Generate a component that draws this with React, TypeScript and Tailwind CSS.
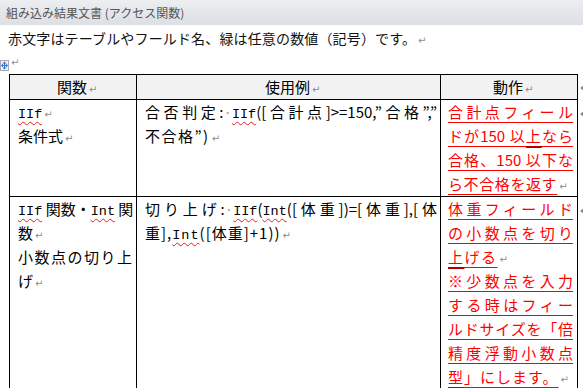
import React from 'react';

// 段落記号・スペース記号など Word の編集記号
const Mark = ({ hang = false }: { hang?: boolean }) => (
  <span
    className={`inline-block ${hang ? 'w-0' : 'w-[10px]'} pl-[2px] text-[10px] leading-none text-[#8c8c8c] font-['DejaVu_Sans',sans-serif] align-baseline`}
  >
    ↵
  </span>
);

const Dot = () => <span className="text-[#9aa3b5]">·</span>;

// スペルチェックの波線付き英字
const W = ({ children }: { children: React.ReactNode }) => (
  <span className="font-['Liberation_Mono',monospace] text-[13.5px] underline decoration-wavy decoration-[#e02020] decoration-1 underline-offset-[3px]">
    {children}
  </span>
);

// 太い下線が重なっている文字
const Thick = ({ children }: { children: React.ReactNode }) => (
  <span className="underline decoration-[2px] decoration-[#b00000] underline-offset-[4px]">{children}</span>
);

const RowEnd = () => (
  <span className="inline-block border-y-[3px] border-y-transparent border-r-[4px] border-r-[#8a8a8a] align-middle" />
);

type LineProps = {
  children: React.ReactNode;
  j?: boolean;
  red?: boolean;
  track?: string;
};

const Line = ({ children, j, red, track = '' }: LineProps) => (
  <div
    className={[
      'h-[24px] leading-[24px] whitespace-nowrap',
      j ? 'text-justify [text-align-last:justify]' : '',
      red ? 'text-[#ff0000] underline decoration-[#ff0000] decoration-1 underline-offset-[4px]' : '',
      track,
    ].join(' ')}
  >
    {children}
  </div>
);

const head = 'h-[26px] border-t border-b border-r border-black bg-[#f2f2f2] leading-[24px] text-center';
const cell = 'border-b border-r border-black';

const MoveHandle = () => (
  <svg className="absolute left-0 top-[60px]" width="9" height="11" viewBox="0 0 9 11">
    <rect x="0.5" y="0.5" width="8" height="10" fill="#f3f3f3" stroke="#a8a8a8" />
    <g stroke="#2f6fd6" strokeWidth="1" fill="none">
      <path d="M4.5 2.5v6M2 5.5h5" />
    </g>
    <g fill="#2f6fd6">
      <path d="M4.5 1.5l-2 2h4zM4.5 9.5l-2-2h4zM1 5.5l2-2v4zM8 5.5l-2-2v4z" />
    </g>
  </svg>
);

export default function App() {
  return (
    <div className="relative h-[388px] w-[583px] overflow-hidden bg-white font-['Noto_Sans_CJK_JP',sans-serif] text-black">
      <div className="h-[25px] bg-linear-to-b from-[#eceef1] to-[#dcdfe4] pl-[6px] text-[12px] leading-[25px] text-[#555]">
        組み込み結果文書 (アクセス関数)
      </div>

      <div className="mt-px h-[24px] pl-[8px] text-[14px] leading-[24px] tracking-[0.15px] text-[#111]">
        赤文字はテーブルやフールド名、緑は任意の数値（記号）です。
        <Mark />
      </div>

      <div className="h-[24px] pl-[9px] pt-[4px] leading-[10px]">
        <Mark />
      </div>
      <MoveHandle />

      <div className="ml-[9px] grid grid-cols-[128px_304px_137px_6px] text-[15px]">
        {/* 見出し行 */}
        <div className={`${head} border-l`}>
          関数
          <Mark hang />
        </div>
        <div className={head}>
          使用例
          <Mark hang />
        </div>
        <div className={head}>
          動作
          <Mark hang />
        </div>
        <div className="pl-[2px] leading-[24px]">
          <RowEnd />
        </div>

        {/* IIf */}
        <div className={`${cell} border-l pl-[8px] pr-[4px]`}>
          <Line>
            <W>IIf</W>
            <Mark />
          </Line>
          <Line>
            条件式
            <Mark />
          </Line>
        </div>
        <div className={`${cell} pl-[8px] pr-[3px]`}>
          <Line j>
            合否判定:<Dot />
            <W>IIf</W>([合計点]&gt;=150,”合格”,”
          </Line>
          <Line track="tracking-[1.5px]">
            不合格”)
            <Mark />
          </Line>
        </div>
        <div className={`${cell} pl-[7px] pr-[4px]`}>
          <Line j red>合計点フィール</Line>
          <Line j red>
            ドが150 以<Thick>上</Thick>なら
          </Line>
          <Line j red>合格、150 以下な</Line>
          <Line red track="tracking-[0.6px]">
            ら不合格を返す
            <Mark />
          </Line>
        </div>
        <div className="pl-[2px] leading-[24px]">
          <RowEnd />
        </div>

        {/* IIf・Int */}
        <div className={`${cell} border-l pl-[8px] pr-[4px]`}>
          <Line j>
            <W>IIf</W> 関数・<W>Int</W> 関
          </Line>
          <Line>
            数
            <Mark />
          </Line>
          <Line j>小数点の切り上</Line>
          <Line>
            げ
            <Mark />
          </Line>
        </div>
        <div className={`${cell} pl-[8px] pr-[3px]`}>
          <Line j>
            切り上げ:<Dot />
            <W>IIf</W>(<W>Int</W>([体重])=[体重],[体
          </Line>
          <Line track="tracking-[1px]">
            重],<W>Int</W>([体重]+1))
            <Mark />
          </Line>
        </div>
        <div className={`${cell} pl-[7px] pr-[4px]`}>
          <Line j red>体重フィールド</Line>
          <Line j red>の小数点を切り</Line>
          <Line red track="tracking-[1.5px]">
            <Thick>上</Thick>げる
            <Mark />
          </Line>
          <Line j red>※少数点を入力</Line>
          <Line j red>する時はフィー</Line>
          <Line j red>ルドサイズを「倍</Line>
          <Line j red>精度浮動小数点</Line>
          <Line red track="tracking-[1px]">
            <Thick>型</Thick>」にします。
            <Mark />
          </Line>
        </div>
        <div className="pl-[2px] leading-[24px]">
          <RowEnd />
        </div>
      </div>
    </div>
  );
}
